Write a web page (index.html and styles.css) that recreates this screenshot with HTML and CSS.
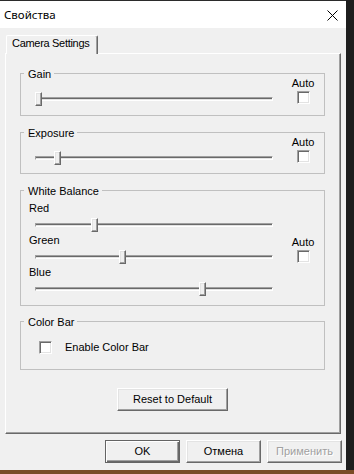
FILE: index.html
```html
<!DOCTYPE html>
<html lang="ru">
  <head>
    <meta charset="UTF-8" />
    <meta name="viewport" content="width=device-width, initial-scale=1.0" />
    <title>Свойства</title>
    <link rel="stylesheet" href="styles.css">
  </head>
  <body>
    <div class="window">
      <div class="titlebar">
        <span class="title">Свойства</span>
        <span class="close">
          <svg width="11" height="11" viewBox="0 0 11 11">
            <path d="M0.5 0.5L10.5 10.5M10.5 0.5L0.5 10.5" stroke="#000" stroke-width="1" />
          </svg>
        </span>
      </div>

      <div class="content">
        <div class="tabs">
          <div class="tab">Camera Settings</div>
        </div>

        <div class="page">
          <div class="group group-gain">
            <span class="group-title">Gain</span>
            <div class="row">
              <div class="sliders">
                <div class="slider"><div class="track"></div><div class="thumb" style="left: 0px"></div></div>
              </div>
              <div class="auto"><span>Auto</span><span class="check"></span></div>
            </div>
          </div>

          <div class="group group-exposure">
            <span class="group-title">Exposure</span>
            <div class="row">
              <div class="sliders">
                <div class="slider"><div class="track"></div><div class="thumb" style="left: 19px"></div></div>
              </div>
              <div class="auto"><span>Auto</span><span class="check"></span></div>
            </div>
          </div>

          <div class="group group-wb">
            <span class="group-title">White Balance</span>
            <div class="row">
              <div class="sliders">
                <div class="slider-label">Red</div>
                <div class="slider"><div class="track"></div><div class="thumb" style="left: 56px"></div></div>
                <div class="slider-label">Green</div>
                <div class="slider"><div class="track"></div><div class="thumb" style="left: 84px"></div></div>
                <div class="slider-label">Blue</div>
                <div class="slider"><div class="track"></div><div class="thumb" style="left: 164px"></div></div>
              </div>
              <div class="auto auto-center"><span>Auto</span><span class="check"></span></div>
            </div>
          </div>

          <div class="group group-colorbar">
            <span class="group-title">Color Bar</span>
            <div class="check-row">
              <span class="check"></span>
              <span>Enable Color Bar</span>
            </div>
          </div>

          <div class="reset-row">
            <button class="btn btn-reset">Reset to Default</button>
          </div>
        </div>

        <div class="footer">
          <button class="btn btn-default">OK</button>
          <button class="btn">Отмена</button>
          <button class="btn btn-disabled">Применить</button>
        </div>
      </div>
    </div>
  </body>
</html>
```

FILE: styles.css
```css
body {
  margin: 0;
  height: 474px;
  overflow: hidden;
  background: linear-gradient(#1d1d1d 470px, #7a4b26 470px);
  font-family: "Liberation Sans", Arial, sans-serif;
  font-size: 11px;
  line-height: 13px;
  color: #000;
}
.window {
  width: 346px;
  height: 470px;
  box-sizing: border-box;
  border-top: 1px solid #2b2b2b;
  background-color: #f0f0f0;
}
.titlebar {
  height: 27px;
  background-color: #fff;
  display: flex;
  align-items: center;
  justify-content: space-between;
  padding-left: 4px;
}
.title {
  font-family: "Noto Sans", "Liberation Sans", sans-serif;
  font-size: 11.5px;
  line-height: 16px;
}
.close {
  display: flex;
  margin-right: 8px;
  margin-top: 1px;
}
.content {
  padding: 7px 5px 0 5px;
}
.tabs {
  display: flex;
  padding-left: 1px;
}
.tab {
  position: relative;
  z-index: 1;
  width: 92px;
  height: 19px;
  box-sizing: border-box;
  margin-bottom: -1px;
  padding: 1px 0 0 5px;
  letter-spacing: -0.3px;
  background-color: #f0f0f0;
  border: 1px solid;
  border-color: #fff #696969 transparent #fff;
  border-bottom: none;
  box-shadow: inset -1px 0 #a0a0a0;
  border-radius: 2px 2px 0 0;
}
.page {
  height: 381px;
  box-sizing: border-box;
  padding: 19px 15px 22px 14px;
  border: 1px solid;
  border-color: #fff #696969 #696969 #fff;
  box-shadow: inset -1px -1px #a0a0a0;
}
.group {
  position: relative;
  box-sizing: border-box;
  border: 1px solid #c0c0c0;
  padding-left: 14px;
}
.group-title {
  position: absolute;
  top: -6px;
  left: 3px;
  padding: 0 3px 0 4px;
  background-color: #f0f0f0;
}
.group-gain {
  height: 43px;
  padding-top: 3px;
  margin-bottom: 16px;
}
.group-exposure {
  height: 42px;
  padding-top: 3px;
  margin-bottom: 16px;
}
.group-wb {
  height: 116px;
  padding-top: 11px;
  margin-bottom: 15px;
}
.group-colorbar {
  height: 49px;
  padding: 19px 0 0 18px;
}
.row {
  display: flex;
  align-items: flex-start;
}
.sliders {
  width: 238px;
  display: flex;
  flex-direction: column;
}
.group-gain .sliders,
.group-exposure .sliders {
  margin-top: 15px;
}
.slider-label {
  margin-left: -6px;
  margin-bottom: 3px;
}
.slider {
  position: relative;
  height: 14px;
  display: flex;
  align-items: center;
  margin-bottom: 2px;
}
.track {
  width: 100%;
  height: 4px;
  box-sizing: border-box;
  border: 1px solid;
  border-color: #a0a0a0 #fff #fff #a0a0a0;
  background: linear-gradient(#696969 50%, #e3e3e3 50%);
}
.thumb {
  position: absolute;
  top: 0;
  width: 7px;
  height: 14px;
  box-sizing: border-box;
  border: 1px solid;
  border-color: #fff #696969 #696969 #fff;
  box-shadow: inset -1px -1px #a0a0a0, inset 1px 1px #e3e3e3;
  background-color: #f0f0f0;
}
.auto {
  margin-left: 18px;
  width: 24px;
  display: flex;
  flex-direction: column;
  align-items: center;
  gap: 1px;
}
.auto-center {
  align-self: center;
  margin-top: -2px;
}
.check {
  width: 13px;
  height: 13px;
  box-sizing: border-box;
  border: 1px solid;
  border-color: #a0a0a0 #fff #fff #a0a0a0;
  box-shadow: inset 1px 1px #696969, inset -1px -1px #e3e3e3;
  background-color: #fff;
}
.check-row {
  display: flex;
  align-items: center;
  gap: 13px;
}
.reset-row {
  display: flex;
  justify-content: center;
  margin-top: 18px;
}
.btn {
  width: 75px;
  height: 23px;
  box-sizing: border-box;
  padding: 0;
  font: inherit;
  color: #000;
  background-color: #f0f0f0;
  border: 1px solid;
  border-color: #fff #696969 #696969 #fff;
  box-shadow: inset -1px -1px #a0a0a0, inset 1px 1px #e3e3e3;
}
.btn-reset {
  width: 111px;
}
.btn-default {
  border-color: #646464;
  box-shadow: inset 1px 1px #fff, inset -1px -1px #696969, inset -2px -2px #a0a0a0;
}
.btn-disabled {
  color: #a0a0a0;
  text-shadow: 1px 1px #fff;
}
.footer {
  display: flex;
  justify-content: flex-end;
  gap: 6px;
  padding-top: 6px;
  margin-right: -1px;
}
```
